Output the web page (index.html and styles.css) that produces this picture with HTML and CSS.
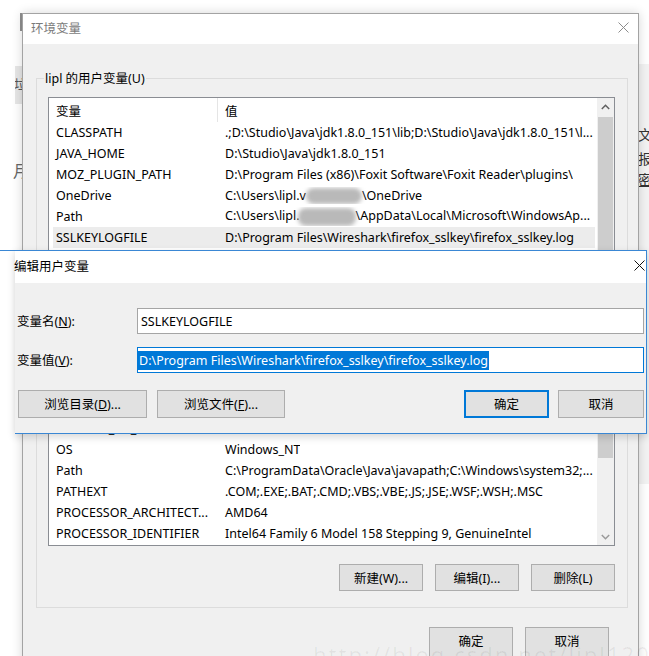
FILE: index.html
```html
<!DOCTYPE html>
<html lang="zh-CN">
<head>
<meta charset="utf-8">
<title>环境变量</title>
<link rel="stylesheet" href="styles.css">
</head>
<body>
<div class="screen">
  <div class="bg-left-line"></div>
  <div class="bg-left-block"><span>垃</span></div>
  <div class="bg-left-char">月</div>
  <div class="bg-right">
    <div class="bg-right-char c1">文</div>
    <div class="bg-right-char c2">报</div>
    <div class="bg-right-char c3">密</div>
  </div>

  <div class="env">
    <div class="env-title">
      <span>环境变量</span>
      <svg class="x-icon" width="11" height="11" viewBox="0 0 11 11"><path d="M0.5 0.5L10.5 10.5M10.5 0.5L0.5 10.5" stroke="#8c8c8c" stroke-width="1" fill="none"/></svg>
    </div>
    <div class="env-body">
      <div class="group">
        <div class="group-label">lipl 的用户变量(U)</div>
        <div class="list list-user">
          <div class="list-main">
            <div class="list-head"><div class="head-name">变量</div><div class="head-val">值</div></div>
            <div class="row"><div class="c1">CLASSPATH</div><div class="c2">.;D:\Studio\Java\jdk1.8.0_151\lib;D:\Studio\Java\jdk1.8.0_151\l...</div></div>
            <div class="row"><div class="c1">JAVA_HOME</div><div class="c2">D:\Studio\Java\jdk1.8.0_151</div></div>
            <div class="row"><div class="c1">MOZ_PLUGIN_PATH</div><div class="c2">D:\Program Files (x86)\Foxit Software\Foxit Reader\plugins\</div></div>
            <div class="row"><div class="c1">OneDrive</div><div class="c2">C:\Users\lipl.v<span class="smudge"></span>\OneDrive</div></div>
            <div class="row"><div class="c1">Path</div><div class="c2">C:\Users\lipl.<span class="smudge s2"></span>\AppData\Local\Microsoft\WindowsAp...</div></div>
            <div class="row sel"><div class="c1">SSLKEYLOGFILE</div><div class="c2">D:\Program Files\Wireshark\firefox_sslkey\firefox_sslkey.log</div></div>
            <div class="row"><div class="c1">TEMP</div><div class="c2">C:\Users\lipl\AppData\Local\Temp</div></div>
          </div>
          <div class="sb">
            <div class="sb-arrow"><svg width="9" height="6" viewBox="0 0 9 6"><path d="M0.8 5L4.5 1.3L8.2 5" fill="none" stroke="#606060" stroke-width="1.5"/></svg></div>
            <div class="sb-thumb thumb-user"></div>
          </div>
        </div>
        <div class="btn-row">
          <div class="btn"><span>新建(N)...</span></div>
          <div class="btn"><span>编辑(E)...</span></div>
          <div class="btn"><span>删除(D)</span></div>
        </div>
      </div>

      <div class="group group-sys">
        <div class="group-label">系统变量(S)</div>
        <div class="list list-sys">
          <div class="list-main">
            <div class="list-head"><div class="head-name">变量</div><div class="head-val">值</div></div>
            <div class="row"><div class="c1">ComSpec</div><div class="c2">C:\Windows\system32\cmd.exe</div></div>
            <div class="row"><div class="c1">DriverData</div><div class="c2">C:\Windows\System32\Drivers\DriverData</div></div>
            <div class="row"><div class="c1">NUMBER_OF_PROCESSORS</div><div class="c2">4</div></div>
            <div class="row"><div class="c1">OS</div><div class="c2">Windows_NT</div></div>
            <div class="row"><div class="c1">Path</div><div class="c2">C:\ProgramData\Oracle\Java\javapath;C:\Windows\system32;...</div></div>
            <div class="row"><div class="c1">PATHEXT</div><div class="c2">.COM;.EXE;.BAT;.CMD;.VBS;.VBE;.JS;.JSE;.WSF;.WSH;.MSC</div></div>
            <div class="row"><div class="c1">PROCESSOR_ARCHITECT...</div><div class="c2">AMD64</div></div>
            <div class="row"><div class="c1">PROCESSOR_IDENTIFIER</div><div class="c2">Intel64 Family 6 Model 158 Stepping 9, GenuineIntel</div></div>
          </div>
          <div class="sb">
            <div class="sb-arrow"><svg width="9" height="6" viewBox="0 0 9 6"><path d="M0.8 5L4.5 1.3L8.2 5" fill="none" stroke="#606060" stroke-width="1.5"/></svg></div>
            <div class="sb-thumb thumb-sys"></div>
            <div class="sb-fill"></div>
            <div class="sb-arrow"><svg width="9" height="6" viewBox="0 0 9 6"><path d="M0.8 1L4.5 4.7L8.2 1" fill="none" stroke="#9a9a9a" stroke-width="1.5"/></svg></div>
          </div>
        </div>
        <div class="btn-row">
          <div class="btn"><span>新建(W)...</span></div>
          <div class="btn"><span>编辑(I)...</span></div>
          <div class="btn"><span>删除(L)</span></div>
        </div>
      </div>

      <div class="btn-row bottom-row">
        <div class="btn tall"><span>确定</span></div>
        <div class="btn tall"><span>取消</span></div>
      </div>
    </div>
  </div>

  <div class="edit">
    <div class="edit-title">
      <span class="edit-title-text">编辑用户变量</span>
      <svg class="x-icon" width="11" height="11" viewBox="0 0 11 11"><path d="M0.5 0.5L10.5 10.5M10.5 0.5L0.5 10.5" stroke="#111" stroke-width="1" fill="none"/></svg>
    </div>
    <div class="edit-body">
      <div class="field">
        <div class="field-label"><span>变量名(<u>N</u>):</span></div>
        <div class="input"><span class="input-text">SSLKEYLOGFILE</span></div>
      </div>
      <div class="field field-2">
        <div class="field-label"><span>变量值(<u>V</u>):</span></div>
        <div class="input focus"><span class="sel-text">D:\Program Files\Wireshark\firefox_sslkey\firefox_sslkey.log</span></div>
      </div>
      <div class="edit-btns">
        <div class="btn ebtn w129"><span>浏览目录(<u>D</u>)...</span></div>
        <div class="btn ebtn w128"><span>浏览文件(<u>F</u>)...</span></div>
        <div class="spacer"></div>
        <div class="btn ebtn ok"><span>确定</span></div>
        <div class="btn ebtn cancel"><span>取消</span></div>
      </div>
    </div>
  </div>

  <div class="watermark">http://blog.csdn.net/lipl1203</div>
</div>
</body>
</html>
```

FILE: styles.css
```css
html, body {
  margin: 0;
  padding: 0;
  background: #fff;
}

body {
  font-family: "Noto Sans", "Noto Sans CJK SC", sans-serif;
  font-size: 12.5px;
  color: #000;
}

.screen {
  position: relative;
  width: 649px;
  height: 656px;
  overflow: hidden;
  background: #fff;
}

/* background window fragments */
.bg-left-line {
  position: absolute;
  left: 20px;
  top: 13px;
  width: 2px;
  height: 18px;
  background: #8f8f8f;
}

.bg-left-block {
  position: absolute;
  left: 15px;
  top: 66px;
  width: 7px;
  height: 38px;
  background: #e6e6e6;
  overflow: hidden;
}

.bg-left-block span {
  display: block;
  margin: 10px 0 0 -1px;
  font-size: 13px;
  line-height: 16px;
  color: #555;
  font-family: "Noto Sans CJK SC", sans-serif;
}

.bg-left-char {
  position: absolute;
  left: 13px;
  top: 160px;
  font-size: 16px;
  line-height: 20px;
  color: #666;
  font-family: "Noto Sans CJK SC", sans-serif;
}

.bg-right {
  position: absolute;
  left: 636px;
  top: 64px;
  width: 40px;
  height: 420px;
  background: #f3f3f3;
}

.bg-right-char {
  position: absolute;
  left: 2px;
  font-size: 14px;
  line-height: 16px;
  color: #333;
  font-family: "Noto Sans CJK SC", sans-serif;
}

.bg-right-char.c1 { top: 62px; }
.bg-right-char.c2 { top: 86px; }
.bg-right-char.c3 { top: 107px; text-decoration: underline; }

/* main dialog */
.env {
  position: absolute;
  left: 22px;
  top: 13px;
  width: 617px;
  height: 660px;
  box-sizing: border-box;
  border: 1px solid #a3a3a3;
  border-bottom: none;
  background: #f0f0f0;
  box-shadow: 0 0 10px rgba(0, 0, 0, 0.16);
}

.env-title {
  height: 30px;
  box-sizing: border-box;
  padding: 0 9px 3px 8px;
  background: #fff;
  display: flex;
  align-items: center;
  justify-content: space-between;
  color: #7b7b7b;
}

.x-icon { display: block; }

.env-body {
  padding: 34px 10px 0 13px;
}

.group {
  position: relative;
  border: 1px solid #dcdcdc;
  padding: 18px 12px 16px 11px;
}

.group-sys {
  margin-top: 13px;
}

.group-label {
  position: absolute;
  top: -9px;
  left: 7px;
  padding: 0 1px;
  background: #f0f0f0;
  line-height: 17px;
}

.list {
  display: flex;
  box-sizing: border-box;
  border: 1px solid #8a8d93;
  background: #fff;
}

.list-user { height: 160px; }
.list-sys { height: 195px; }

.list-main {
  flex: 1;
  overflow: hidden;
}

.list-head {
  display: flex;
  height: 24px;
}

.head-name {
  width: 169px;
  box-sizing: border-box;
  padding-left: 7px;
  border-right: 1px solid #e5e5e5;
  display: flex;
  align-items: center;
}

.head-val {
  padding-left: 7px;
  display: flex;
  align-items: center;
}

.row {
  display: flex;
  align-items: center;
  height: 21px;
  margin: 0 2px 0 4px;
  white-space: nowrap;
}

.row.sel { background: #ececec; }

.row .c1 {
  width: 165px;
  box-sizing: border-box;
  padding-left: 3px;
  overflow: hidden;
  flex: none;
}

.row .c2 {
  padding-left: 7px;
  overflow: hidden;
}

.smudge {
  display: inline-block;
  width: 56px;
  height: 16px;
  vertical-align: middle;
  background: #b9b9b9;
  border-radius: 8px;
  filter: blur(2px);
}

.smudge.s2 {
  width: 58px;
  height: 18px;
  margin-left: -2px;
}

.sb {
  width: 17px;
  flex: none;
  background: #f0f0f0;
  display: flex;
  flex-direction: column;
}

.sb-arrow {
  height: 17px;
  flex: none;
  display: flex;
  align-items: center;
  justify-content: center;
}

.sb-thumb {
  margin: 2px 1px 0;
  background: #cdcdcd;
  flex: none;
}

.thumb-user { height: 140px; }
.thumb-sys { height: 87px; }

.sb-fill { flex: 1; }

.btn-row {
  display: flex;
  justify-content: flex-end;
  gap: 12px;
  margin-top: 18px;
}

.btn {
  width: 84px;
  height: 27px;
  box-sizing: border-box;
  border: 1px solid #adadad;
  background: #e1e1e1;
  display: flex;
  align-items: center;
  justify-content: center;
  white-space: nowrap;
  padding-bottom: 1px;
}

.bottom-row {
  margin-top: 19px;
  margin-right: 19px;
}

.btn.tall {
  height: 32px;
  padding-bottom: 5px;
}

/* edit dialog */
.edit {
  position: absolute;
  left: 15px;
  top: 250px;
  width: 632px;
  height: 184px;
  box-sizing: border-box;
  border: 1px solid #3a87d4;
  border-left: none;
  background: #f0f0f0;
  box-shadow: 0 3px 8px rgba(0, 0, 0, 0.16);
}

.edit::before {
  content: "";
  position: absolute;
  left: -15px;
  top: -1px;
  width: 15px;
  height: 1px;
  background: #3a87d4;
}

.edit-title {
  height: 32px;
  box-sizing: border-box;
  background: #fff;
  display: flex;
  align-items: center;
  justify-content: space-between;
  padding: 0 1px 3px 0;
}

.edit-title-text {
  margin-left: -1px;
}

.edit-body {
  padding: 25px 2px 0 2px;
}

.field {
  display: flex;
  align-items: center;
  height: 26px;
}

.field-2 { margin-top: 13px; }

.field-label {
  width: 120px;
  flex: none;
  padding-bottom: 2px;
}

.input {
  flex: 1;
  height: 26px;
  box-sizing: border-box;
  border: 1px solid #a5a5a5;
  background: #fff;
  display: flex;
  align-items: center;
  padding-left: 3px;
  white-space: nowrap;
  overflow: hidden;
}

.input.focus {
  border-color: #0078d7;
  padding-left: 0;
}

.sel-text {
  background: #0078d7;
  color: #fff;
  line-height: 19px;
  padding: 0 1px 0 1px;
}

.edit-btns {
  display: flex;
  margin-top: 17px;
}

.ebtn {
  height: 28px;
  padding-bottom: 2px;
}

.w129 { width: 129px; margin-left: 1px; }
.w128 { width: 128px; margin-left: 10px; }
.spacer { flex: 1; }

.ebtn.ok {
  width: 85px;
  border: 2px solid #0078d7;
}

.ebtn.cancel {
  width: 86px;
  margin-left: 9px;
}

.watermark {
  position: absolute;
  left: 313px;
  top: 641px;
  font-size: 22px;
  line-height: 26px;
  letter-spacing: 2px;
  color: rgba(0, 0, 0, 0.06);
  white-space: nowrap;
}
```
